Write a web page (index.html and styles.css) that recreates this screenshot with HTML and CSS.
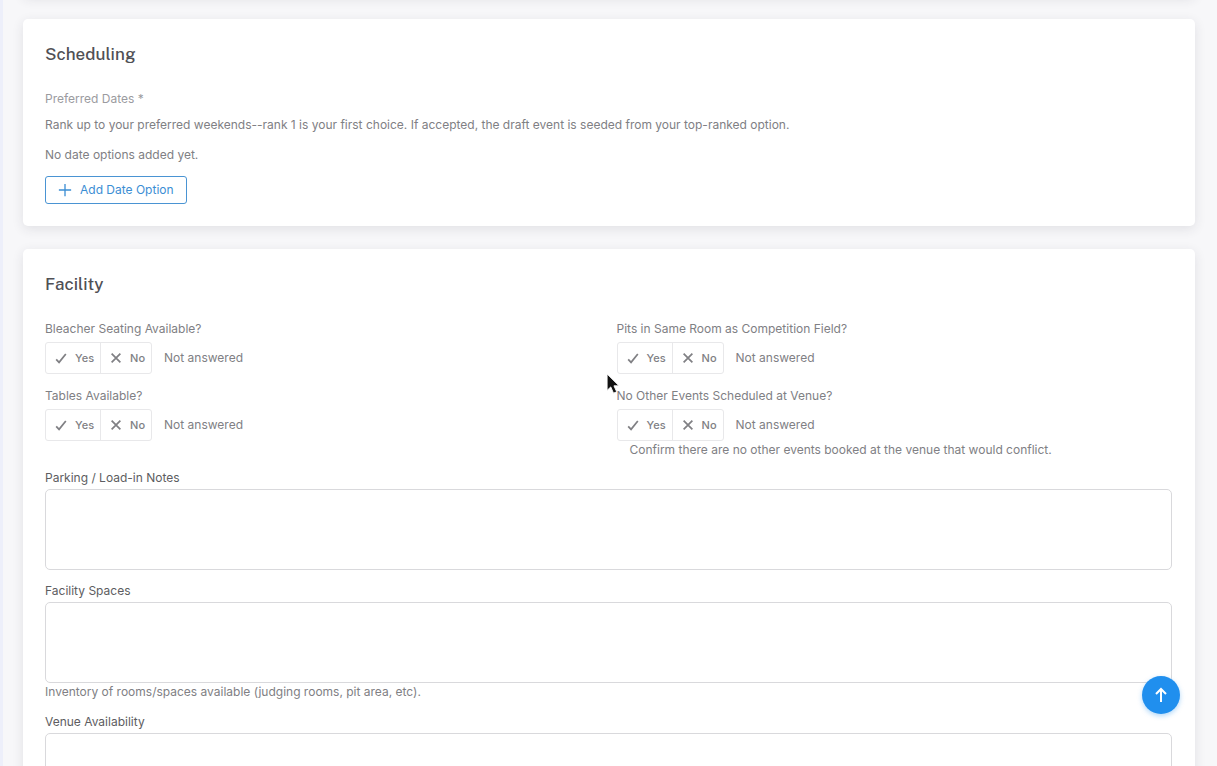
FILE: index.html
```html
<!DOCTYPE html>
<html lang="en">
<head>
<meta charset="utf-8">
<title>Event Application</title>
<meta name="viewport" content="width=device-width, initial-scale=1">
<link rel="stylesheet" href="styles.css">
</head>
<body>
<svg class="sprite" aria-hidden="true">
  <symbol id="check" viewBox="0 0 16 16"><path d="M2.500 9.500 5.800 13 13.500 3.500"/></symbol>
  <symbol id="cross" viewBox="0 0 16 16"><path d="M3 3 13 13M13 3 3 13"/></symbol>
  <symbol id="plus" viewBox="0 0 16 16"><path d="M8 1V15M1 8H15"/></symbol>
  <symbol id="arrow" viewBox="0 0 16 16"><path d="M8 15V2M3 7 8 2 13 7"/></symbol>
</svg>
<main class="page">
  <div class="card card-previous"></div>

  <section class="card">
    <h2 class="card-title">Scheduling</h2>
    <h3 class="field-title">Preferred Dates *</h3>
    <p class="hint intro">Rank up to your preferred weekends--rank 1 is your first choice. If accepted, the draft event is seeded from your top-ranked option.</p>
    <p class="hint empty">No date options added yet.</p>
    <button class="add-button" type="button"><svg class="icon"><use href="#plus"/></svg>Add Date Option</button>
  </section>

  <section class="card">
    <h2 class="card-title">Facility</h2>
    <div class="questions">
      <div class="question" role="group" aria-labelledby="q-bleachers">
        <div class="question-label" id="q-bleachers">Bleacher Seating Available?</div>
        <div class="answer">
          <div class="toggle">
            <button type="button" aria-pressed="false"><svg class="icon"><use href="#check"/></svg>Yes</button>
            <button type="button" aria-pressed="false"><svg class="icon"><use href="#cross"/></svg>No</button>
          </div>
          <span>Not answered</span>
        </div>
      </div>
      <div class="question" role="group" aria-labelledby="q-pits">
        <div class="question-label" id="q-pits">Pits in Same Room as Competition Field?</div>
        <div class="answer">
          <div class="toggle">
            <button type="button" aria-pressed="false"><svg class="icon"><use href="#check"/></svg>Yes</button>
            <button type="button" aria-pressed="false"><svg class="icon"><use href="#cross"/></svg>No</button>
          </div>
          <span>Not answered</span>
        </div>
      </div>
      <div class="question" role="group" aria-labelledby="q-tables">
        <div class="question-label" id="q-tables">Tables Available?</div>
        <div class="answer">
          <div class="toggle">
            <button type="button" aria-pressed="false"><svg class="icon"><use href="#check"/></svg>Yes</button>
            <button type="button" aria-pressed="false"><svg class="icon"><use href="#cross"/></svg>No</button>
          </div>
          <span>Not answered</span>
        </div>
      </div>
      <div class="question" role="group" aria-labelledby="q-events">
        <div class="question-label" id="q-events">No Other Events Scheduled at Venue?</div>
        <div class="answer">
          <div class="toggle">
            <button type="button" aria-pressed="false"><svg class="icon"><use href="#check"/></svg>Yes</button>
            <button type="button" aria-pressed="false"><svg class="icon"><use href="#cross"/></svg>No</button>
          </div>
          <span>Not answered</span>
        </div>
        <p class="hint question-hint">Confirm there are no other events booked at the venue that would conflict.</p>
      </div>
    </div>
    <div class="fields">
      <div class="field">
        <label for="parking">Parking / Load-in Notes</label>
        <textarea id="parking"></textarea>
      </div>
      <div class="field">
        <label for="spaces">Facility Spaces</label>
        <textarea id="spaces"></textarea>
        <p class="hint">Inventory of rooms/spaces available (judging rooms, pit area, etc).</p>
      </div>
      <div class="field">
        <label for="venue">Venue Availability</label>
        <textarea id="venue"></textarea>
      </div>
    </div>
  </section>
</main>
<button class="to-top" type="button" aria-label="Scroll to top"><svg class="icon"><use href="#arrow"/></svg></button>
<svg class="pointer" viewBox="0 0 16 24" aria-hidden="true"><path d="M1 1V19L5 15.200 8 22 11.500 20.500 8.500 14H14Z"/></svg>
</body>
</html>
```
FILE: styles.css
```css
* { box-sizing: border-box; }

body {
  margin: 0;
  height: 100vh;
  overflow: hidden;
  background: #f7f7f9;
  border-left: 3px solid #edeffa;
  color: #808084;
  font: 12px/18px Inter, "Liberation Sans", sans-serif;
}

h2, h3, p { margin: 0; font-weight: 400; }
button, textarea { font: inherit; color: inherit; }
.sprite { display: none; }

.icon {
  width: 14px;
  height: 14px;
  flex: none;
  fill: none;
  stroke: currentColor;
  stroke-width: 2;
}

.page {
  display: flex;
  flex-direction: column;
  gap: 23px;
  height: 100%;
  overflow: hidden;
  padding: 0 22px 0 20px;
}

.card {
  flex: none;
  padding: 23px 23px 22px 22px;
  border-radius: 5px;
  background: #fff;
  box-shadow: 0 3px 12px rgba(47, 43, 61, 0.11);
}

/* Tail of the section scrolled out above */
.card-previous { margin-top: -49px; }

.card-title {
  margin-bottom: 24px;
  color: #505055;
  font: 500 17px/24px "Public Sans", Roboto, sans-serif;
}

.field-title { color: #9b9b9f; font-size: 12px; }
.intro { margin-top: 8px; }
.empty { margin: 12px 0; }

.add-button {
  display: flex;
  align-items: center;
  gap: 8px;
  height: 28px;
  padding: 0 12px;
  border: 1px solid #4a94d3;
  border-radius: 3px;
  background: #fff;
  color: #3c8ed4;
}

.add-button .icon { stroke-width: 1.5; }

.questions {
  display: grid;
  grid-template-columns: 1fr 1fr;
  gap: 13px 16px;
}

.question-label { margin-bottom: 4px; }

.answer { display: flex; align-items: center; gap: 12px; }

.toggle {
  display: flex;
  height: 32px;
  border: 1px solid #e8e8ea;
  border-radius: 3px;
}

.toggle button {
  display: flex;
  align-items: center;
  gap: 7px;
  padding: 0 6px 0 8px;
  border: 0;
  background: none;
  font-size: 11px;
  font-weight: 500;
}

.toggle button + button { border-left: 1px solid #e8e8ea; }

.question-hint { padding-left: 13px; }

.fields {
  display: flex;
  flex-direction: column;
  gap: 12px;
  margin-top: 10px;
}

.field { display: flex; flex-direction: column; }
.field label { margin-bottom: 2px; color: #5d5d61; }

.field textarea {
  height: 81px;
  padding: 8px 12px;
  border: 1px solid #d9d9dc;
  border-radius: 5px;
  background: #fff;
  resize: none;
}

.to-top {
  position: fixed;
  right: 37px;
  bottom: 52px;
  display: grid;
  place-items: center;
  width: 38px;
  height: 38px;
  padding: 0;
  border: 0;
  border-radius: 50%;
  background: #208fee;
  color: #fff;
  box-shadow: 0 2px 5px rgba(32, 143, 238, 0.35);
}

.to-top .icon { width: 16px; height: 16px; }

.pointer {
  position: absolute;
  left: 606px;
  top: 373px;
  width: 15px;
  height: 22px;
  fill: #111;
  stroke: #fff;
  stroke-width: 1;
}
```
